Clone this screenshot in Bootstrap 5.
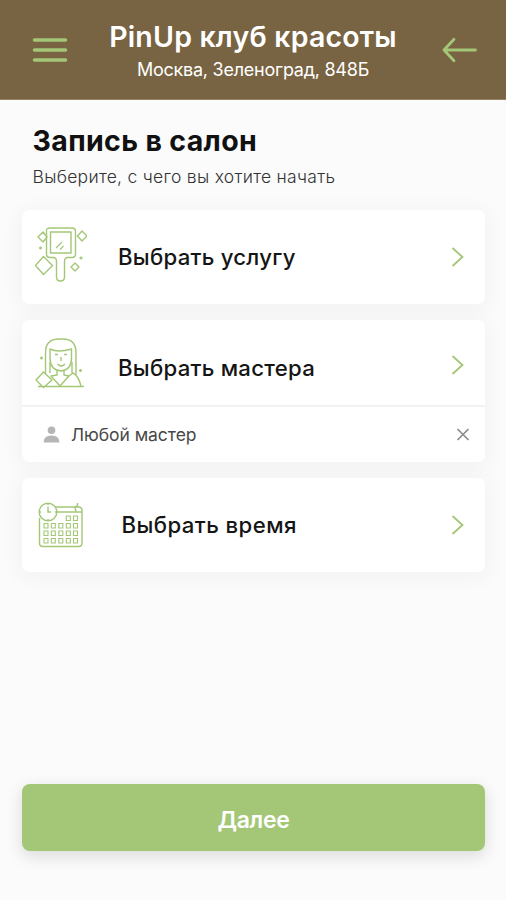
<!DOCTYPE html>
<html lang="ru">
<head>
<meta charset="utf-8">
<meta name="viewport" content="width=device-width, initial-scale=1">
<title>PinUp клуб красоты</title>
<link href="https://cdn.jsdelivr.net/npm/bootstrap@5.3.0/dist/css/bootstrap.min.css" rel="stylesheet">
<style>
body{font-family:Inter,"Noto Sans",sans-serif;background:#fbfbfb;color:#151515;min-height:900px}
svg{display:block;fill:none;stroke:#a3c776;flex:none}
.topbar{height:100px;background:#786342;color:#fff;padding:0 28px 0 32px;border-bottom:1px solid #938369}
.salon-name{font-size:28.500px;font-weight:600;line-height:34px;letter-spacing:.18px;margin:20px 0 0;white-space:nowrap}
.salon-address{font-size:18px;line-height:24px;letter-spacing:-.25px;margin:4px 0 0;white-space:nowrap}
.intro{padding:24px 33px 0 32.5px;height:110px}
.intro h1{font-size:28.5px;font-weight:700;line-height:34px;letter-spacing:.35px;margin:0;color:#111}
.intro p{font-size:17.5px;font-weight:300;line-height:24px;margin:7px 0 0;letter-spacing:.28px;color:#333;white-space:nowrap}
.steps{padding:0 21px 0 22px;gap:16px}
.step{border:0;border-radius:7px;box-shadow:0 3px 20px 4px rgba(0,0,0,.035);background:#fff}
.step-row{height:94px;padding:0 20px 0 13px;color:#151515;text-decoration:none}
.step-name{font-size:22.2px;font-weight:500;line-height:26px;letter-spacing:.25px;white-space:nowrap;margin-left:31px}
.step-time{margin-left:34.5px;letter-spacing:.42px}
.with-choice .step-row{height:85px}
.with-choice .step-name{padding-top:10px}
.with-choice .chevron{margin-top:4px}
.choice{height:57px;border-top:2px solid #f2f2f2;padding:0 15px 0 21px}
.choice-name{font-size:17.5px;line-height:24px;letter-spacing:-.05px;margin-left:11px;color:#484848}
.plain{background:none;border:0;padding:0}
.next{margin:212px 21px 0 22px;height:67px;background:#a3c776;border:0;border-radius:8px;color:#fff;font-size:23px;font-weight:600;line-height:28px;letter-spacing:-.3px;padding-top:10px;box-shadow:0 5px 16px 1px rgba(0,0,0,.12)}
</style>
<script src="https://cdn.jsdelivr.net/npm/bootstrap@5.3.0/dist/js/bootstrap.bundle.min.js"></script>
</head>
<body class="d-flex flex-column">
<header class="topbar d-flex align-items-center justify-content-between">
  <button class="plain" aria-label="Меню"><svg width="36" height="28" viewBox="0 0 36 28" stroke-width="3.6" stroke-linecap="round"><path d="M2.500 4h31M2.500 14h31M2.500 24h31"/></svg></button>
  <div class="text-center align-self-start pe-1">
    <div class="salon-name">PinUp клуб красоты</div>
    <div class="salon-address">Москва, Зеленоград, 848Б</div>
  </div>
  <button class="plain" aria-label="Назад"><svg width="36" height="26" viewBox="0 0 36 26" stroke-width="2.8" stroke-linecap="round" stroke-linejoin="round"><path d="M33.500 13H2M12 2.200 2 13l10 10.800"/></svg></button>
</header>
<main class="d-flex flex-column">
  <section class="intro">
    <h1>Запись в салон</h1>
    <p>Выберите, с чего вы хотите начать</p>
  </section>
  <div class="steps d-flex flex-column">
    <div class="card step">
      <a href="#" class="step-row d-flex align-items-center">
        <svg width="52" height="60" viewBox="0 0 52 60" stroke-width="1.400" stroke-linejoin="round">
          <path d="M15 1h22q3.500 0 3.500 3.500V27q0 3.500-3.500 3.500h-4q-3.500 0-3.500 4V50q0 4-4 4t-4-4V34.500q0-4-3.500-4h-3q-3.500 0-3.500-3.500V4.500Q11 1 15 1z"/><path d="M15.500 5h20.500v21H15.500z"/><path d="m21 21 6-6M25 22.500l3.500-3.500" stroke-width="1.200"/>
          <path d="m8 5 4 5-4 5-5-5zM47 4l5 5-5 5-4.500-5zM8.500 29.500l9 9-9 9-8-9zM40 36l4 4-4 4-4-4z"/><path d="M5.500 19.500v3M4 21h3M46 29.500v3M44.500 31h3"/>
        </svg>
        <span class="step-name">Выбрать услугу</span>
        <svg class="chevron ms-auto" width="14" height="22" viewBox="0 0 14 22" stroke-width="1.800"><path d="m1.500 2 10 9-10 9"/></svg>
      </a>
    </div>
    <div class="card step with-choice">
      <a href="#" class="step-row d-flex align-items-center">
        <svg width="52" height="60" viewBox="0 0 52 60" stroke-width="1.400" stroke-linejoin="round">
          <path d="M10.500 41V20Q10.500 6 24 6h4Q41 6 41 20v22"/><path d="M15 16q8 4 21.500 0v9q0 12-10.500 13-11-1-11-13z"/><path d="M22 37v5l-6 1 9 10 9-10-5-1v-5M15 29v11M37 29v11M34 43l4-3q5 2 8 13"/><path d="m8.500 39 8.500 8-8.500 7.500L1 47zM3 53.500h46"/><path d="M20 21.500h3M29 21.500h3M26 24v4M22.500 31q4 4 7.500 0M6.500 23.500v3M5 25h3M45.500 36v3M44 37.500h3"/>
        </svg>
        <span class="step-name">Выбрать мастера</span>
        <svg class="chevron ms-auto" width="14" height="22" viewBox="0 0 14 22" stroke-width="1.800"><path d="m1.500 2 10 9-10 9"/></svg>
      </a>
      <div class="choice d-flex align-items-center">
        <svg width="17" height="18" viewBox="0 0 17 18"><g fill="#b5b5b5" stroke="none"><circle cx="8.500" cy="4.200" r="3.800"/><path d="M.5 16.500q0-7 8-7t8 7z"/></g></svg>
        <span class="choice-name">Любой мастер</span>
        <button class="plain ms-auto" aria-label="Убрать"><svg width="14" height="14" viewBox="0 0 14 14"><path d="m1.500 1 11 11m0-11-11 11" stroke="#8b8b8b" stroke-width="1.700"/></svg></button>
      </div>
    </div>
    <div class="card step">
      <a href="#" class="step-row d-flex align-items-center">
        <svg width="52" height="60" viewBox="0 0 52 60" stroke-width="1.400">
          <path d="M20 12h23.500q3.500 0 3.500 3.500V48q0 3.500-3.500 3.500H8q-3.500 0-3.500-3.500V23M22 17h25"/><circle cx="13" cy="17" r="8.800"/><path d="M13 11.500V17h3M13 8v2M13 24v2M4 17h2M20 17h2"/><path d="M42.500 8v2.500L40 12l1 5"/>
          <path stroke-width="1.100" d="M31.300 21h4v4.500h-4zM38.500 21h4v4.500h-4zM9 28.500h4V33H9zM16.300 28.500h4V33h-4zM23.800 28.500h4V33h-4zM31.300 28.500h4V33h-4zM38.500 28.500h4V33h-4zM9 36h4v4.500H9zM16.300 36h4v4.500h-4zM23.800 36h4v4.500h-4zM31.300 36h4v4.500h-4zM38.500 36h4v4.500h-4zM9 43.500h4V48H9zM16.300 43.500h4V48h-4zM23.800 43.500h4V48h-4zM31.300 43.500h4V48h-4zM38.500 43.500h4V48h-4z"/>
        </svg>
        <span class="step-name step-time">Выбрать время</span>
        <svg class="chevron ms-auto" width="14" height="22" viewBox="0 0 14 22" stroke-width="1.800"><path d="m1.500 2 10 9-10 9"/></svg>
      </a>
    </div>
  </div>
  <button class="btn next">Далее</button>
</main>
</body>
</html>
